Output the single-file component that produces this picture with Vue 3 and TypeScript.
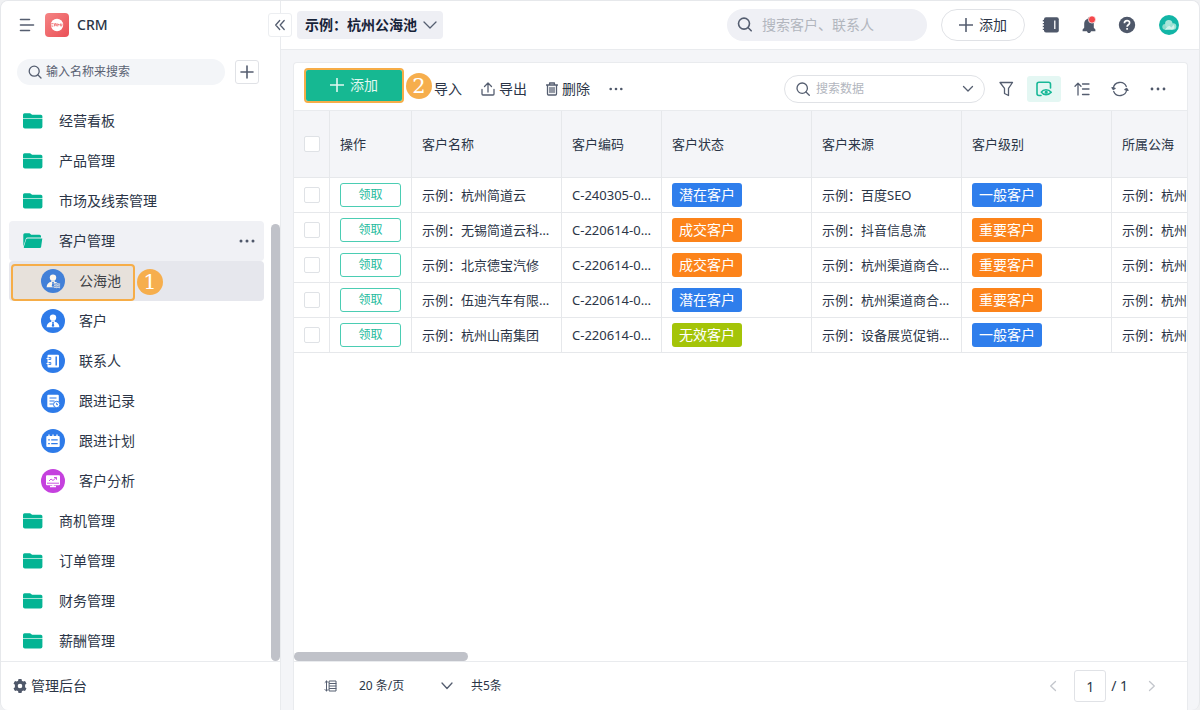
<script setup lang="ts">
import { ref } from 'vue'

type IconKind = 'folder' | 'open' | 'pool' | 'customer' | 'contact' | 'record' | 'plan' | 'chart'

interface NavItem {
  label: string
  icon: IconKind
  child?: boolean
}

interface Customer {
  name: string
  code: string
  status: string
  statusTone: string
  source: string
  level: string
  levelTone: string
  pool: string
}

const nav: NavItem[] = [
  { label: '经营看板', icon: 'folder' },
  { label: '产品管理', icon: 'folder' },
  { label: '市场及线索管理', icon: 'folder' },
  { label: '客户管理', icon: 'open' },
  { label: '公海池', icon: 'pool', child: true },
  { label: '客户', icon: 'customer', child: true },
  { label: '联系人', icon: 'contact', child: true },
  { label: '跟进记录', icon: 'record', child: true },
  { label: '跟进计划', icon: 'plan', child: true },
  { label: '客户分析', icon: 'chart', child: true },
  { label: '商机管理', icon: 'folder' },
  { label: '订单管理', icon: 'folder' },
  { label: '财务管理', icon: 'folder' },
  { label: '薪酬管理', icon: 'folder' },
]

const columns = ['操作', '客户名称', '客户编码', '客户状态', '客户来源', '客户级别', '所属公海']

const pool = '示例：杭州'
const rows: Customer[] = [
  { name: '示例：杭州简道云', code: 'C-240305-0001', status: '潜在客户', statusTone: 'blue', source: '示例：百度SEO', level: '一般客户', levelTone: 'blue', pool },
  { name: '示例：无锡简道云科技', code: 'C-220614-0004', status: '成交客户', statusTone: 'orange', source: '示例：抖音信息流', level: '重要客户', levelTone: 'orange', pool },
  { name: '示例：北京德宝汽修', code: 'C-220614-0003', status: '成交客户', statusTone: 'orange', source: '示例：杭州渠道商合作', level: '重要客户', levelTone: 'orange', pool },
  { name: '示例：伍迪汽车有限公司', code: 'C-220614-0002', status: '潜在客户', statusTone: 'blue', source: '示例：杭州渠道商合作', level: '重要客户', levelTone: 'orange', pool },
  { name: '示例：杭州山南集团', code: 'C-220614-0001', status: '无效客户', statusTone: 'green', source: '示例：设备展览促销活动', level: '一般客户', levelTone: 'blue', pool },
]

const page = ref('1')
</script>

<template>
  <div class="app">
    <aside class="sidebar">
      <div class="brand">
        <button class="plain" aria-label="菜单">
          <svg width="16" height="16" viewBox="0 0 16 16" class="line bold"><path d="M1.5 2.5h9M1.5 8h13M1.5 13.5h9" /></svg>
        </button>
        <svg width="24" height="24" viewBox="0 0 24 24" class="logo">
          <defs>
            <linearGradient id="logo-fill" x1="0" y1="0" x2="1" y2="1">
              <stop offset="0" stop-color="#f58585" /><stop offset="1" stop-color="#ea4f56" />
            </linearGradient>
          </defs>
          <rect width="24" height="24" rx="4" fill="url(#logo-fill)" />
          <circle cx="12" cy="12" r="6.2" fill="#fff" />
          <path d="M8.600 10.700H6.400l-.6.600v1.200l.6.600h1.900M9.600 13.300v-2.600h1.700l.5.500-.5.700H9.800m1.100 0 .9 1.400M12.800 13.300v-2.600l1.400 1.500 1.500-1.500v2.600M16.600 13.300l.5-2.600" fill="none" stroke="#ef6b6e" stroke-width=".9" />
        </svg>
        <span class="brand-name">CRM</span>
      </div>

      <div class="side-search">
        <label class="pill grey">
          <svg width="14" height="14" viewBox="0 0 14 14" class="line"><circle cx="6.2" cy="6.2" r="5" /><path d="m10 10 3 3" /></svg>
          <input type="text" placeholder="输入名称来搜索" aria-label="输入名称来搜索" />
        </label>
        <button class="square" aria-label="新建">
          <svg width="14" height="14" viewBox="0 0 14 14" class="line bold"><path d="M7 1v12M1 7h12" /></svg>
        </button>
      </div>

      <nav class="nav">
        <div v-for="item in nav" :key="item.label" class="nav-row" :class="{ child: item.child, opened: item.icon === 'open', active: item.icon === 'pool' }">
          <a href="#" class="nav-link">
            <svg v-if="item.icon === 'folder'" width="20" height="16" viewBox="0 0 20 16">
              <path d="M0 5V1.800Q0 .3 1.500.3h5.200Q7.600.3 8.200 1L9 1.800h8.900Q19.400 1.800 19.400 3.300V5z" fill="#04b494" />
              <path d="M0 6h19.400v7.500q0 1.900-1.900 1.900H1.900Q0 15.400 0 13.500z" fill="#04b494" />
              <path d="M0 5.500h19.400" stroke="#a4e4d7" stroke-width="1" />
            </svg>
            <svg v-else-if="item.icon === 'open'" width="20" height="16" viewBox="0 0 20 16">
              <path d="M.3 13.500V1.800Q.3.300 1.800.300h4.700L8.200 1.800h8.300q1.500 0 1.500 1.500v1.100H4.500q-1.300 0-1.700 1.300z" fill="#04b494" />
              <path d="M4.700 5.400h14.600l-1.200 8.500q-.2 1.100-1.300 1.100H1.500q-1 0-.7-1.100L3 6.700q.4-1.300 1.700-1.300z" fill="#04b494" />
            </svg>
            <svg v-else width="24" height="24" viewBox="0 0 24 24">
              <circle cx="12" cy="12" r="12" :fill="item.icon === 'chart' ? '#c541de' : '#2e7be9'" />
              <g v-if="item.icon === 'pool' || item.icon === 'customer'">
                <circle cx="12" cy="8.600" r="3.200" fill="#fff" />
                <path d="M9.800 11.500h4.400l-.7 1.200c2.900.5 4.700 2.300 4.900 5.500H5.600c.2-3.200 2-5 4.900-5.500z" fill="#fff" />
                <path d="m12 12.600 1 1-.4.700.7 2.600-1.300 1.200-1.300-1.200.7-2.600-.4-.7z" fill="#2e7be9" />
                <template v-if="item.icon === 'pool'">
                  <path d="M12.800 14h6.500v5h-6.500z" fill="#5791e6" />
                  <path d="M13 15c1-.8 2 .8 3 0s2 .8 3 0M13 16.800c1-.8 2 .8 3 0s2 .8 3 0M13 18.500c1-.8 2 .8 3 0s2 .8 3 0" fill="none" stroke="#e6effc" stroke-width="1" />
                </template>
              </g>
              <g v-else-if="item.icon === 'contact'">
                <rect x="6.500" y="5.800" width="11.500" height="12.700" rx="1" fill="#fff" />
                <path d="M15.200 7.500v9" stroke="#2e7be9" stroke-width="1.500" />
                <path d="M7.800 8.500h2v2h-2zM7.800 13.500h2v2h-2z" fill="none" stroke="#2e7be9" stroke-width=".9" />
                <path d="M5.500 9.500H8M5.500 14.500H8" stroke="#fff" />
              </g>
              <g v-else-if="item.icon === 'record'">
                <rect x="6.300" y="5.800" width="11.500" height="12.400" rx="1" fill="#fff" />
                <path d="M8.500 9h7M8.500 12h5M8.500 15h3.500" stroke="#2e7be9" stroke-width="1.200" />
                <circle cx="15.700" cy="15.500" r="3.200" fill="#fff" stroke="#2e7be9" />
                <path d="M15.700 13.800v1.900h1.300" fill="none" stroke="#2e7be9" />
              </g>
              <g v-else-if="item.icon === 'plan'">
                <rect x="5.300" y="7" width="13.400" height="11" rx="1" fill="#fff" />
                <path d="M8 5.600v3M12 5.600v3M16 5.600v3" stroke="#fff" stroke-width="1.300" />
                <path d="M7.200 10.900h1.600M10.200 10.900h6.500M7.200 14.600h1.600M10.200 14.600h6.500" stroke="#2e7be9" stroke-width="1.400" />
              </g>
              <g v-else>
                <rect x="5" y="6.200" width="14" height="10" rx="1" fill="#fff" />
                <path d="M12 16v2M9 17.500h6" stroke="#fff" stroke-width="1.500" />
                <path d="m8 12 2-2 2 1.500 3.300-3M13 8.500h2.500v2.300M6 14.200h12" fill="none" stroke="#c541de" stroke-width=".9" />
              </g>
            </svg>
            <span>{{ item.label }}</span>
          </a>
          <button v-if="item.icon === 'open'" class="plain nav-more" aria-label="更多">
            <svg width="16" height="4" viewBox="0 0 16 4" class="dots"><circle cx="2" cy="2" r="1.500" /><circle cx="8" cy="2" r="1.500" /><circle cx="14" cy="2" r="1.500" /></svg>
          </button>
          <template v-if="item.icon === 'pool'">
            <span class="highlight"></span>
            <span class="step step-one">1</span>
          </template>
        </div>
        <span class="v-thumb"></span>
      </nav>

      <a href="#" class="admin">
        <svg width="14" height="14" viewBox="0 0 14 14">
          <path fill="#4f586a" fill-rule="evenodd" d="M5.500 0h3l.4 1.800 1.200.7 1.900-.6 1.500 2.600-1.400 1.300v2.400l1.400 1.300-1.500 2.600-1.900-.6-1.200.7-.4 1.800h-3l-.4-1.800-1.200-.7-1.900.6L.5 9.500l1.400-1.300V5.800L.5 4.500 2 1.900l1.900.6 1.200-.7zM7 4.700a2.300 2.300 0 1 0 0 4.600 2.300 2.300 0 0 0 0-4.600z" />
        </svg>
        <span>管理后台</span>
      </a>
      <button class="square collapse" aria-label="收起">
        <svg width="12" height="12" viewBox="0 0 12 12" class="line"><path d="M5.700 1.500 1.700 6l4 4.500M10.200 1.500 6.200 6l4 4.500" /></svg>
      </button>
    </aside>

    <div class="main">
      <header class="topbar">
        <button class="title">
          <span>示例：杭州公海池</span>
          <svg width="14" height="8" viewBox="0 0 14 8" class="line"><path d="m1 1 6 6 6-6" /></svg>
        </button>
        <label class="pill global-search">
          <svg width="16" height="16" viewBox="0 0 16 16" class="line bold"><circle cx="7" cy="6.600" r="5.500" /><path d="m11.200 10.800 3 3" /></svg>
          <input type="text" placeholder="搜索客户、联系人" aria-label="搜索客户、联系人" />
        </label>
        <button class="top-add">
          <svg width="14" height="14" viewBox="0 0 14 14" class="line bold"><path d="M7 .5v13M.5 7h13" /></svg>
          <span>添加</span>
        </button>
        <div class="top-icons">
          <button class="plain" aria-label="通讯录">
            <svg width="18" height="18" viewBox="0 0 18 18">
              <rect x="2" y="1.200" width="14.800" height="15.300" rx="2" fill="#4f586a" />
              <path d="M12.800 4.500v8.500" stroke="#fff" stroke-width="1.300" />
              <path d="M.8 4.700h2.400M.8 7.600h2.400M.8 10.500h2.400M.8 13.400h2.400" stroke="#4f586a" stroke-width="1.400" />
            </svg>
          </button>
          <button class="plain" aria-label="通知">
            <svg width="18" height="18" viewBox="0 0 18 18">
              <path d="M9 1.500c.8 0 1.200.5 1.200 1.200 2.300.7 3.600 2.500 3.600 4.800v4.300l1.600 1.700v1.700H2.600v-1.700l1.600-1.700V7.500c0-2.300 1.300-4.100 3.600-4.800 0-.7.400-1.200 1.200-1.200zM7 15.200h4c-.2 1.200-.9 1.800-2 1.800s-1.800-.6-2-1.800z" fill="#4f586a" />
              <circle cx="12" cy="3.500" r="3.600" fill="#f5484b" stroke="#fff" stroke-width=".7" />
            </svg>
          </button>
          <button class="plain" aria-label="帮助">
            <svg width="18" height="18" viewBox="0 0 18 18">
              <circle cx="9" cy="9" r="8.200" fill="#4f586a" />
              <path d="M6.400 7.300c0-3.700 5.400-3.400 5.200-.3-.1 1.700-2.500 1.800-2.500 3.700M9.100 12v1.700" fill="none" stroke="#fff" stroke-width="1.700" />
            </svg>
          </button>
          <button class="plain" aria-label="个人中心">
            <svg width="20" height="20" viewBox="0 0 20 20">
              <circle cx="10" cy="10" r="10" fill="#12b5a6" />
              <circle cx="6.200" cy="11.800" r="2.900" fill="#8fdccd" />
              <circle cx="9.800" cy="8.800" r="3.700" fill="#a9e6da" />
              <circle cx="14" cy="11.500" r="3.300" fill="#9ce1d3" />
              <path d="M6 14.800c3-4.500 4.500-4.800 6.500-2.200l2-2.800q2.500 4-1.500 5z" fill="#d2f3ec" />
            </svg>
          </button>
        </div>
      </header>

      <main class="content">
        <section class="card">
          <div class="toolbar">
            <div class="add-wrap">
              <button class="add">
                <svg width="14" height="14" viewBox="0 0 14 14" class="line bold"><path d="M7 .5v13M.5 7h13" /></svg>
                <span>添加</span>
              </button>
              <span class="step step-two">2</span>
            </div>
            <button class="tool import">
              <svg width="14" height="14" viewBox="0 0 14 14" class="line"><path d="M1 8v4q0 1 1 1h10q1 0 1-1V8M7 1v8M4 6l3 3 3-3" /></svg>
              <span>导入</span>
            </button>
            <button class="tool">
              <svg width="14" height="14" viewBox="0 0 14 14" class="line"><path d="M1 7.500V12q0 1 1 1h10q1 0 1-1V7.500M7 10V1.200M3.500 4.500 7 1l3.500 3.500" /></svg>
              <span>导出</span>
            </button>
            <button class="tool">
              <svg width="12" height="14" viewBox="0 0 12 14" class="line"><path d="M.5 3h11M3.600 2.700V1h4.800v1.700M1.500 3.300V12q0 1 1 1h7q1 0 1-1V3.300M4 5.500v5M6 5.500v5M8 5.500v5" /></svg>
              <span>删除</span>
            </button>
            <button class="plain more" aria-label="更多操作">
              <svg width="14" height="4" viewBox="0 0 14 4" class="dots"><circle cx="1.700" cy="2" r="1.300" /><circle cx="7" cy="2" r="1.300" /><circle cx="12.300" cy="2" r="1.300" /></svg>
            </button>
            <label class="pill data-search">
              <svg width="14" height="14" viewBox="0 0 14 14" class="line"><circle cx="6.200" cy="6.200" r="5.200" /><path d="m10 10 3.300 3.300" /></svg>
              <input type="text" placeholder="搜索数据" aria-label="搜索数据" />
              <svg width="12" height="8" viewBox="0 0 12 8" class="line"><path d="m1.500 1.500 4.500 4.500 4.500-4.500" /></svg>
            </label>
            <div class="view-tools">
              <button class="plain" aria-label="筛选">
                <svg width="16" height="16" viewBox="0 0 16 16" class="line"><path d="M2 1.500h12.500L10.500 7.300v7.200l-4-2V7.300z" /></svg>
              </button>
              <button class="plain on" aria-label="显示字段">
                <svg width="16" height="16" viewBox="0 0 16 16" class="line bold"><path d="M5 14.500H3Q1 14.500 1 12.500V3.200Q1 1.200 3 1.200h9.500q2 0 2 2V7M5.300 11.200c2-3.200 7.200-3.200 9.900 0-2.700 3.200-7.900 3.200-9.900 0z" /><circle cx="10.200" cy="11.200" r=".8" /></svg>
              </button>
              <button class="plain" aria-label="排序">
                <svg width="16" height="16" viewBox="0 0 16 16" class="line"><path d="M4 14V2.500M1 5.200l3-3 3 3M8.500 3h6.500M8.500 8h6.500M8.500 13.500h6.500" /></svg>
              </button>
              <button class="plain" aria-label="刷新">
                <svg width="18" height="16" viewBox="0 0 18 16" class="line">
                  <path d="M2.300 7.500a6.800 6.800 0 0 1 13-2M15.700 8.500a6.800 6.800 0 0 1-13 2" />
                  <path d="m1 6.700 1.200 1.800 1.900-1zM17 9.300l-1.200-1.800-1.900 1z" />
                </svg>
              </button>
              <button class="plain" aria-label="更多设置">
                <svg width="16" height="4" viewBox="0 0 16 4" class="dots"><circle cx="2" cy="2" r="1.400" /><circle cx="8" cy="2" r="1.400" /><circle cx="14" cy="2" r="1.400" /></svg>
              </button>
            </div>
          </div>

          <div class="table-area">
            <table>
              <colgroup>
                <col class="w-check" /><col class="w-action" /><col class="w-wide" /><col class="w-code" />
                <col class="w-wide" /><col class="w-wide" /><col class="w-wide" /><col class="w-wide" />
              </colgroup>
              <thead>
                <tr>
                  <th class="check"><input type="checkbox" aria-label="全选" /></th>
                  <th v-for="name in columns" :key="name">{{ name }}</th>
                </tr>
              </thead>
              <tbody>
                <tr v-for="row in rows" :key="row.name">
                  <td class="check"><input type="checkbox" :aria-label="row.name" /></td>
                  <td><button class="claim">领取</button></td>
                  <td>{{ row.name }}</td>
                  <td>{{ row.code }}</td>
                  <td><span class="tag" :class="row.statusTone">{{ row.status }}</span></td>
                  <td>{{ row.source }}</td>
                  <td><span class="tag" :class="row.levelTone">{{ row.level }}</span></td>
                  <td>{{ row.pool }}</td>
                </tr>
              </tbody>
            </table>
            <span class="h-thumb"></span>
          </div>

          <footer class="pager">
            <button class="plain" aria-label="行高">
              <svg width="14" height="12" viewBox="0 0 14 12" class="line thin"><path d="M2.500 1v10M1 2.500 2.500 1 4 2.500M1 9.500 2.500 11 4 9.500M5.500 1h6.500v10H5.500zM5.500 3.500H12M5.500 6H12M5.500 8.500H12" /></svg>
            </button>
            <div class="page-size">
              <select aria-label="每页条数"><option>20 条/页</option><option>50 条/页</option></select>
              <svg width="12" height="8" viewBox="0 0 12 8" class="line"><path d="m1 1 5 5.500L11 1" /></svg>
            </div>
            <span class="total">共5条</span>
            <div class="pages">
              <button class="plain" aria-label="上一页"><svg width="8" height="12" viewBox="0 0 8 12" class="line faint"><path d="M6.500 1.500 1.700 6l4.800 4.500" /></svg></button>
              <input v-model="page" type="text" aria-label="页码" />
              <span>/ 1</span>
              <button class="plain" aria-label="下一页"><svg width="8" height="12" viewBox="0 0 8 12" class="line faint"><path d="M1.500 1.500 6.300 6l-4.800 4.500" /></svg></button>
            </div>
          </footer>
        </section>
      </main>
    </div>
  </div>
</template>

<style>
html,
body,
#app {
  height: 100%;
}

body {
  margin: 0;
  background: #f0f1f3;
}
</style>

<style scoped>
* {
  box-sizing: border-box;
}

.app {
  display: flex;
  height: 100%;
  overflow: hidden;
  border: solid #e6e8eb;
  border-width: 1px 1px 0;
  border-radius: 8px;
  background: #f4f5f8;
  color: #2b3547;
  font-family: "Noto Sans", "Noto Sans CJK SC", sans-serif;
  font-size: 14px;
  line-height: 20px;
}

button,
input,
select {
  margin: 0;
  padding: 0;
  border: 0;
  background: none;
  color: inherit;
  font: inherit;
}

input {
  min-width: 0;
  outline: none;
}

a {
  color: inherit;
  text-decoration: none;
}

svg {
  display: block;
  flex: none;
}

.line {
  fill: none;
  stroke: #555e70;
  stroke-width: 1.3;
  stroke-linecap: round;
  stroke-linejoin: round;
}

.line.bold {
  stroke-width: 1.6;
}

.line.thin {
  stroke-width: 1;
}

.line.faint {
  stroke: #c3c6cc;
}

.dots {
  fill: #4f586a;
}

.plain {
  display: flex;
  align-items: center;
  justify-content: center;
}

.square {
  display: flex;
  flex: none;
  align-items: center;
  justify-content: center;
  width: 24px;
  height: 24px;
  border: 1px solid #e0e2e6;
  border-radius: 3px;
  background: #fff;
}

.pill {
  display: flex;
  align-items: center;
  min-width: 0;
  border-radius: 16px;
}

.pill input {
  flex: 1;
  width: 0;
}

.pill input::placeholder {
  color: #b2b6be;
  opacity: 1;
}

/* Sidebar */
.sidebar {
  position: relative;
  display: flex;
  flex: none;
  flex-direction: column;
  width: 280px;
  border-right: 1px solid #e9ebee;
  background: #fff;
}

.brand {
  display: flex;
  align-items: center;
  height: 48px;
  padding-left: 18px;
}

.logo {
  margin: 0 8px 0 10px;
}

.brand-name {
  font-weight: 500;
}

.side-search {
  display: flex;
  align-items: center;
  gap: 10px;
  padding: 10px 21px 16px 16px;
}

.grey {
  flex: 1;
  gap: 4px;
  height: 26px;
  padding: 0 11px;
  background: #f3f5f8;
  font-size: 12px;
}

.grey input::placeholder {
  color: #5a6273;
}

.nav {
  position: relative;
  flex: 1;
  min-height: 0;
}

.nav-row {
  position: relative;
  display: flex;
  align-items: center;
  height: 40px;
  margin: 0 16px 0 8px;
  border-radius: 4px;
}

.nav-link {
  display: flex;
  flex: 1;
  align-items: center;
  gap: 16px;
  padding-left: 14px;
}

.child .nav-link {
  gap: 14px;
  padding-left: 32px;
}

.opened {
  background: #f0f1f5;
}

.active {
  background: #e6e7ed;
}

.nav-more {
  padding: 8px 9px;
}

.highlight {
  position: absolute;
  top: 3px;
  left: 2px;
  width: 124px;
  height: 37px;
  border: 2px solid #f6ad48;
  border-radius: 4px;
  background: rgba(246, 173, 72, 0.1);
}

.step {
  position: absolute;
  width: 26px;
  height: 26px;
  border-radius: 50%;
  background: #f6ae4d;
  color: #fff;
  font-family: "DejaVu Serif", serif;
  font-size: 21px;
  line-height: 26px;
  text-align: center;
}

.step-one {
  top: 8px;
  left: 128px;
}

.v-thumb {
  position: absolute;
  right: 0;
  bottom: 0;
  width: 9px;
  height: 78%;
  border-radius: 5px;
  background: #c0c2c9;
}

.admin {
  display: flex;
  align-items: center;
  gap: 4px;
  height: 49px;
  padding-left: 12px;
  border-top: 1px solid #e9ebee;
}

.collapse {
  position: absolute;
  z-index: 1;
  top: 12px;
  right: -12px;
  border-color: #eceef1;
}

/* Top bar */
.main {
  display: flex;
  flex: 1;
  flex-direction: column;
  min-width: 0;
}

.topbar {
  display: flex;
  align-items: center;
  height: 49px;
  padding: 0 20px 0 16px;
  border-bottom: 1px solid #e9ebee;
  background: #fff;
}

.title {
  display: flex;
  align-items: center;
  gap: 6px;
  height: 28px;
  padding: 0 6px 0 8px;
  border-radius: 4px;
  background: #eeeff4;
  color: #172338;
  font-weight: 700;
}

.global-search {
  gap: 9px;
  width: 200px;
  height: 32px;
  margin-left: auto;
  padding: 0 10px;
  background: #eff0f5;
}

.top-add {
  display: flex;
  align-items: center;
  justify-content: center;
  gap: 6px;
  width: 84px;
  height: 32px;
  margin: 0 17px 0 14px;
  border: 1px solid #e0e2e6;
  border-radius: 16px;
}

.top-icons {
  display: flex;
  align-items: center;
  gap: 20px;
}

.top-icons button:last-child {
  margin-left: 3px;
}

/* Card */
.content {
  display: flex;
  flex: 1;
  min-height: 0;
  padding: 12px 11px 0 12px;
}

.card {
  display: flex;
  flex: 1;
  flex-direction: column;
  min-width: 0;
  border: solid #e9ebee;
  border-width: 1px 1px 0;
  border-radius: 4px 4px 0 0;
  background: #fff;
}

.toolbar {
  display: flex;
  flex: none;
  align-items: center;
  height: 48px;
  padding: 5px 12px 0 10px;
  border-bottom: 1px solid #e9ebee;
}

.add-wrap {
  position: relative;
  margin: -8px 9px 0 0;
  border: 2px solid #f6ad48;
  border-radius: 4px;
}

.add {
  display: flex;
  align-items: center;
  justify-content: center;
  gap: 6px;
  width: 96px;
  height: 31px;
  border-radius: 2px;
  background: #16b892;
  color: #e2f8f1;
}

.add .line {
  stroke: #e2f8f1;
}

.step-two {
  top: 3px;
  left: 100px;
}

.tool {
  display: flex;
  align-items: center;
  gap: 4px;
  margin-right: 19px;
}

.import {
  gap: 7px;
}

.more {
  height: 24px;
}

.data-search {
  gap: 6px;
  width: 201px;
  height: 28px;
  margin-left: auto;
  padding: 0 10px 0 11px;
  border: 1px solid #e0e2e6;
  font-size: 12px;
}

.view-tools {
  display: flex;
  gap: 4px;
  margin-left: 4px;
}

.view-tools button {
  width: 34px;
  height: 26px;
  border-radius: 3px;
}

.view-tools .on {
  background: #e4f7f3;
}

.on .line {
  stroke: #18b897;
}

/* Table */
.table-area {
  position: relative;
  flex: 1;
  min-height: 0;
  overflow: hidden;
}

table {
  width: 968px;
  border-spacing: 0;
  table-layout: fixed;
  font-size: 13px;
}

.w-check {
  width: 36px;
}

.w-action {
  width: 82px;
}

.w-wide {
  width: 150px;
}

.w-code {
  width: 100px;
}

th,
td {
  height: 35px;
  padding: 0 10px;
  overflow: hidden;
  border: solid #e6e8eb;
  border-width: 0 1px 1px 0;
  font-weight: 400;
  text-align: left;
  text-overflow: ellipsis;
  white-space: nowrap;
}

th {
  height: 67px;
  background: #f4f5f8;
}

.check {
  padding: 0;
}

.check input {
  display: block;
  width: 16px;
  height: 16px;
  margin-left: 10px;
  border: 1px solid #dfe2e6;
  border-radius: 2px;
  background: #fff;
  appearance: none;
}

.claim {
  display: block;
  width: 61px;
  height: 24px;
  border: 1px solid #4bcdb3;
  border-radius: 3px;
  color: #25bb9d;
  font-size: 12px;
}

.tag {
  display: block;
  width: 70px;
  border-radius: 3px;
  color: #fff;
  font-size: 14px;
  line-height: 24px;
  text-align: center;
}

.blue {
  background: #2f7eec;
}

.orange {
  background: #fc831a;
}

.green {
  background: #a4c408;
}

.h-thumb {
  position: absolute;
  bottom: 0;
  left: 0;
  width: 174px;
  height: 9px;
  border-radius: 5px;
  background: #c0c2c9;
}

/* Pager */
.pager {
  display: flex;
  flex: none;
  align-items: center;
  height: 49px;
  padding: 0 31px 0 30px;
  border-top: 1px solid #e9ebee;
  font-size: 12px;
}

.page-size {
  position: relative;
  display: flex;
  align-items: center;
  margin: 0 18px 0 21px;
}

.page-size select {
  width: 94px;
  height: 24px;
  outline: none;
  appearance: none;
}

.page-size svg {
  position: absolute;
  right: 0;
  pointer-events: none;
}

.pages {
  display: flex;
  align-items: center;
  margin-left: auto;
  font-size: 14px;
}

.pages input {
  width: 32px;
  height: 32px;
  margin: 0 5px 0 17px;
  border: 1px solid #e0e2e6;
  border-radius: 3px;
  text-align: center;
}

.pages span {
  margin-right: 20px;
}
</style>
